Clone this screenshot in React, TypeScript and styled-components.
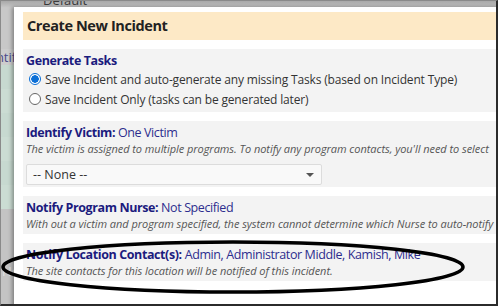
import * as React from 'react';
import styled, { createGlobalStyle } from 'styled-components';

const GlobalStyle = createGlobalStyle`
html, body {
    margin: 0;
    padding: 0;
    overflow: hidden;
    background: #fff;
}
`;

const uiFont = `"Open Sans", "Noto Sans", "Liberation Sans", sans-serif`;

const Frame = styled.div`
position: relative;
width: 498px;
height: 306px;
box-sizing: border-box;
overflow: hidden;
border-top: 1px solid #8a8a8a;
border-left: 1px solid #8a8a8a;
border-right: 2px solid #2b2b2b;
border-bottom: 2px solid #2b2b2b;
font-family: ${uiFont};
`;

// the dimmed page behind the dialog
const Backdrop = styled.div`
display: flex;
flex-direction: column;
height: 100%;
`;

const BackRow = styled.div<{ h: number, bg: string }>`
height: ${(props) => props.h}px;
flex: ${(props) => props.h ? `0 0 auto` : `1 1 auto`};
background: ${(props) => props.bg};
overflow: hidden;
position: relative;
white-space: nowrap;
`;

const BackText = styled.span<{ shift: number, color: string, top: number }>`
display: block;
margin-left: ${(props) => props.shift}px;
margin-top: ${(props) => props.top}px;
font-size: 13px;
line-height: 16px;
color: ${(props) => props.color};
`;

const Dialog = styled.div`
position: absolute;
left: 13px;
top: 6px;
right: -12px;
bottom: -12px;
background: #fff;
box-shadow: -2px 0 4px rgba(0, 0, 0, 0.35);
padding: 5px 9px;
display: flex;
flex-direction: column;
gap: 9px;
`;

const Header = styled.div`
height: 28px;
background: #fde9c6;
padding-left: 4px;
font-size: 14.5px;
font-weight: 700;
line-height: 28px;
color: #222;
letter-spacing: -0.4px;
`;

const Section = styled.div<{ pb: number }>`
background: #f3f3f3;
padding: 3px 3px ${(props) => props.pb}px 3px;
white-space: nowrap;
overflow: hidden;
`;

const Heading = styled.div`
font-size: 12.5px;
line-height: 17px;
color: #1b1b7e;
letter-spacing: -0.4px;
`;

const Label = styled.span`
font-weight: 700;
`;

const Value = styled.span`
color: #2d2d8e;
`;

const Note = styled.div`
font-size: 11px;
line-height: 15px;
font-style: italic;
color: #555;
letter-spacing: -0.05px;
`;

const RadioRow = styled.label`
display: flex;
align-items: center;
height: 20px;
gap: 4px;
padding-left: 3px;
font-size: 12px;
color: #333;
letter-spacing: -0.16px;
`;

const Radio = styled.span<{ checked: boolean }>`
width: 12px;
height: 12px;
box-sizing: border-box;
border-radius: 50%;
border: 1px solid ${(props) => props.checked ? `#0b6fd6` : `#666`};
background: ${(props) => props.checked ? `radial-gradient(circle, #0b6fd6 0 3.5px, #fff 4px)` : `#fff`};
flex: 0 0 auto;
`;

const Select = styled.div`
margin-top: 8px;
width: 296px;
height: 21px;
box-sizing: border-box;
border: 1px solid #dcdcdc;
border-radius: 2px;
background: #f9f9f9;
display: flex;
align-items: center;
justify-content: space-between;
padding: 0 7px 0 6px;
font-size: 12.5px;
color: #333;
`;

const Caret = styled.span`
width: 0;
height: 0;
border-left: 4px solid transparent;
border-right: 4px solid transparent;
border-top: 4px solid #555;
`;

const Annotation = styled.svg`
position: absolute;
left: 0;
top: 0;
pointer-events: none;
`;

export default function App() {
    return (
        <Frame>
            <GlobalStyle />
            <Backdrop>
                <BackRow h={7} bg="linear-gradient(#a9a9a9, #c9c9c9)">
                    <BackText shift={42} top={-9} color="#3a3a3a">Default</BackText>
                </BackRow>
                <BackRow h={41} bg="#c8c8c8" />
                <BackRow h={16} bg="#cdcdcd">
                    <BackText shift={-24} top={0} color="#4a4a8a">Identifi</BackText>
                </BackRow>
                <BackRow h={24} bg="#c7d9d0" />
                <BackRow h={24} bg="#cbdcd3" />
                <BackRow h={24} bg="#c7d9d0" />
                <BackRow h={24} bg="#cbdcd3" />
                <BackRow h={24} bg="#c7d9d0" />
                <BackRow h={24} bg="#cbdcd3" />
                <BackRow h={48} bg="#c4c4c4" />
                <BackRow h={0} bg="#c4c4c4">
                    <BackText shift={1} top={6} color="#e2e2e2">No</BackText>
                </BackRow>
            </Backdrop>

            <Dialog>
                <Header>Create New Incident</Header>

                <Section pb={3}>
                    <Heading><Label>Generate Tasks</Label></Heading>
                    <RadioRow>
                        <Radio checked={true} />
                        Save Incident and auto-generate any missing Tasks (based on Incident Type)
                    </RadioRow>
                    <RadioRow>
                        <Radio checked={false} />
                        Save Incident Only (tasks can be generated later)
                    </RadioRow>
                </Section>

                <Section pb={2}>
                    <Heading><Label>Identify Victim:</Label> <Value>One Victim</Value></Heading>
                    <Note>The victim is assigned to multiple programs. To notify any program contacts, you'll need to select</Note>
                    <Select>
                        <span>-- None --</span>
                        <Caret />
                    </Select>
                </Section>

                <Section pb={3}>
                    <Heading><Label>Notify Program Nurse:</Label> <Value>Not Specified</Value></Heading>
                    <Note>With out a victim and program specified, the system cannot determine which Nurse to auto-notify</Note>
                </Section>

                <Section pb={3}>
                    <Heading><Label>Notify Location Contact(s):</Label> <Value>Admin, Administrator Middle, Kamish, Mike</Value></Heading>
                    <Note>The site contacts for this location will be notified of this incident.</Note>
                </Section>
            </Dialog>

            <Annotation width="498" height="306" viewBox="0 0 498 306">
                <ellipse cx="232" cy="266" rx="230" ry="25" fill="none" stroke="#000" strokeWidth="3.5" />
            </Annotation>
        </Frame>
    );
}
